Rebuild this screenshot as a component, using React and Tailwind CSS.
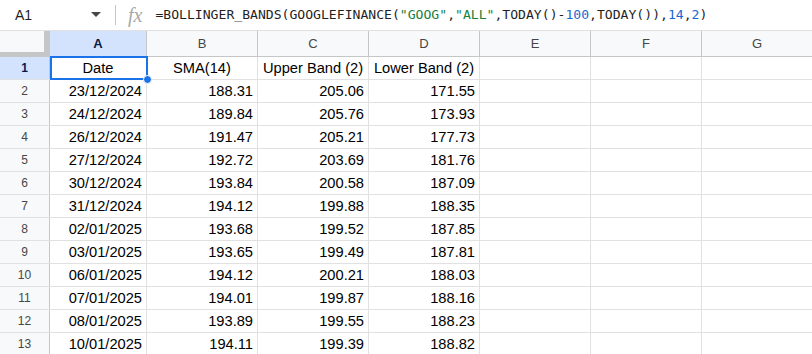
import React from "react";

const rows = [
  ["23/12/2024", "188.31", "205.06", "171.55"],
  ["24/12/2024", "189.84", "205.76", "173.93"],
  ["26/12/2024", "191.47", "205.21", "177.73"],
  ["27/12/2024", "192.72", "203.69", "181.76"],
  ["30/12/2024", "193.84", "200.58", "187.09"],
  ["31/12/2024", "194.12", "199.88", "188.35"],
  ["02/01/2025", "193.68", "199.52", "187.85"],
  ["03/01/2025", "193.65", "199.49", "187.81"],
  ["06/01/2025", "194.12", "200.21", "188.03"],
  ["07/01/2025", "194.01", "199.87", "188.16"],
  ["08/01/2025", "193.89", "199.55", "188.23"],
  ["10/01/2025", "194.11", "199.39", "188.82"],
];

const widths = ["w-[97px]", "w-[111px]", "w-[111px]", "w-[111px]", "w-[111px]", "w-[111px]", "w-[111px]"];
const letters = ["A", "B", "C", "D", "E", "F", "G"];

function Cell({ w, children, align = "right" }) {
  return (
    <div
      className={`${w} shrink-0 h-full border-r border-[#e1e1e1] flex items-center px-[4px] text-[14.67px] text-[#000] ${
        align === "center" ? "justify-center" : "justify-end"
      }`}
    >
      {children}
    </div>
  );
}

export default function App() {
  return (
    <div
      className="w-[812px] h-[354px] overflow-hidden bg-white relative"
      style={{ fontFamily: '"Liberation Sans", Arial, sans-serif' }}
    >
      {/* formula bar */}
      <div className="h-[31px] flex items-center border-b border-[#e1e1e1]">
        <div className="w-[108px] shrink-0 flex items-center pl-[15px] pr-[6px]">
          <span className="text-[14px] text-[#1f1f1f] flex-1">A1</span>
          <svg width="10" height="6" viewBox="0 0 10 6" className="mr-[1px]">
            <path d="M0 0 L10 0 L5 5 Z" fill="#444746" />
          </svg>
        </div>
        <div className="w-[1px] h-[20px] bg-[#c7c7c7] ml-[7px] mr-[12px]" />
        <span
          className="text-[20px] text-[#a8a8a8] italic mr-[13px] leading-none"
          style={{ fontFamily: '"Liberation Serif", serif' }}
        >
          fx
        </span>
        <span
          className="text-[13.1px] text-[#1f1f1f] whitespace-nowrap"
          style={{ fontFamily: '"DejaVu Sans Mono", monospace' }}
        >
          =BOLLINGER_BANDS(GOOGLEFINANCE(
          <span className="text-[#188038]">"GOOG"</span>,
          <span className="text-[#188038]">"ALL"</span>,TODAY()-
          <span className="text-[#1967d2]">100</span>,TODAY()),
          <span className="text-[#1967d2]">14</span>,
          <span className="text-[#1967d2]">2</span>)
        </span>
      </div>

      {/* column headers */}
      <div className="h-[26px] flex border-b border-[#c4c7c5] bg-[#f8f9fa]">
        <div className="w-[50px] shrink-0 h-full border-r border-[#c4c7c5] bg-[#f8f9fa] relative">
          <div className="absolute right-0 top-0 w-[5px] h-[22px] bg-[#c4c7c5]" />
          <div className="absolute left-0 bottom-0 w-full h-[4px] bg-[#c4c7c5]" />
        </div>
        {letters.map((l, i) => (
          <div
            key={l}
            className={`${widths[i]} shrink-0 h-full border-r border-[#c4c7c5] flex items-center justify-center text-[13px] ${
              i === 0 ? "bg-[#d3e3fd] text-[#041e49] font-bold" : "text-[#444746]"
            }`}
          >
            {l}
          </div>
        ))}
      </div>

      {/* header row 1 */}
      <div className="h-[23px] flex border-b border-[#e1e1e1]">
        <div className="w-[50px] shrink-0 h-full border-r border-[#c4c7c5] bg-[#d3e3fd] flex items-center justify-center text-[12px] font-bold text-[#041e49]">
          1
        </div>
        <Cell w={widths[0]} align="center">Date</Cell>
        <Cell w={widths[1]} align="center">SMA(14)</Cell>
        <Cell w={widths[2]} align="center">Upper Band (2)</Cell>
        <Cell w={widths[3]} align="center">Lower Band (2)</Cell>
        <Cell w={widths[4]} />
        <Cell w={widths[5]} />
        <Cell w={widths[6]} />
      </div>

      {rows.map((r, idx) => (
        <div key={idx} className="h-[23px] flex border-b border-[#e1e1e1]">
          <div className="w-[50px] shrink-0 h-full border-r border-[#c4c7c5] bg-[#f8f9fa] flex items-center justify-center text-[12px] text-[#444746]">
            {idx + 2}
          </div>
          {r.map((v, j) => (
            <Cell key={j} w={widths[j]}>
              {v}
            </Cell>
          ))}
          <Cell w={widths[4]} />
          <Cell w={widths[5]} />
          <Cell w={widths[6]} />
        </div>
      ))}

      {/* selection */}
      <div className="absolute left-[50px] top-[56px] w-[98px] h-[24px] border-2 border-[#1a73e8] pointer-events-none" />
      <div className="absolute left-[143px] top-[75px] w-[9px] h-[9px] rounded-full bg-[#1a73e8] border border-white" />
    </div>
  );
}
